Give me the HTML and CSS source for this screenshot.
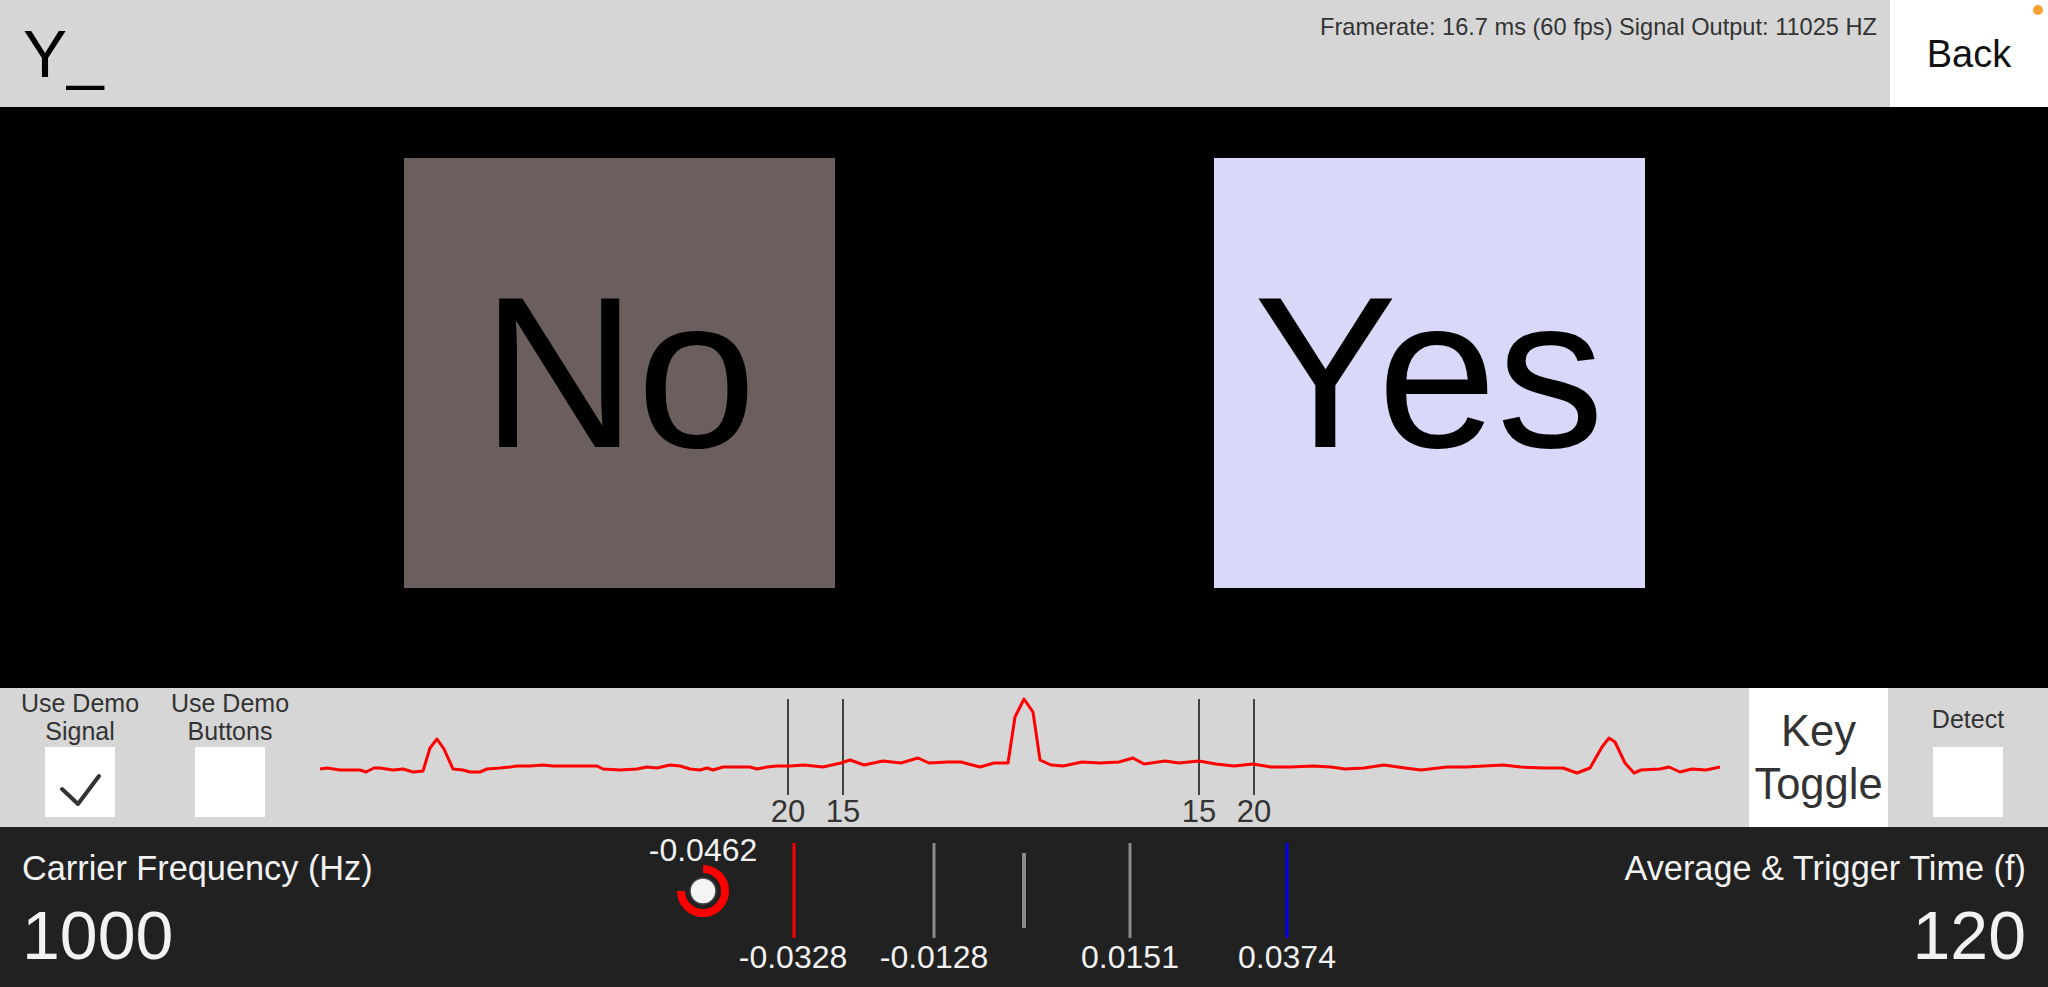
FILE: index.html
```html
<!DOCTYPE html>
<html>
<head>
<meta charset="utf-8">
<link rel="stylesheet" href="styles.css">
</head>
<body>
<div class="app">
  <header class="topbar">
    <div class="title">Y_</div>
    <div class="stats">Framerate: 16.7 ms (60 fps) Signal Output: 11025 HZ</div>
    <div class="back">Back<span class="dot"></span></div>
  </header>

  <main class="stage">
    <div class="choice choice-no">No</div>
    <div class="choice choice-yes">Yes</div>
  </main>

  <section class="controls">
    <div class="opt opt-signal">
      <div class="opt-label">Use Demo<br>Signal</div>
      <div class="box">
        <svg width="70" height="70" viewBox="0 0 70 70"><polyline class="check" points="17,42 33,57 54,29"/></svg>
      </div>
    </div>
    <div class="opt opt-buttons">
      <div class="opt-label">Use Demo<br>Buttons</div>
      <div class="box"></div>
    </div>
    <div class="graph">
      <svg width="1449" height="139" viewBox="300 688 1449 139">
        <line class="mark" x1="788" y1="699" x2="788" y2="795"/>
        <line class="mark" x1="843" y1="699" x2="843" y2="795"/>
        <line class="mark" x1="1199" y1="699" x2="1199" y2="795"/>
        <line class="mark" x1="1254" y1="699" x2="1254" y2="795"/>
        <text class="mark-label" x="788" y="822">20</text>
        <text class="mark-label" x="843" y="822">15</text>
        <text class="mark-label" x="1199" y="822">15</text>
        <text class="mark-label" x="1254" y="822">20</text>
        <polyline class="spectrum" points="320,769 327,768 340,770 360,770 366,772 374,768 380,768 393,770 403,769 413,772 423,771 430,748 437,739 444,749 453,769 463,770 470,772 480,772 487,769 500,768 510,767 517,766 530,766 543,765 553,766 580,766 597,766 603,769 620,770 637,769 647,767 657,768 670,765 680,766 690,769 700,770 707,768 713,770 723,767 737,767 750,767 757,769 767,767 777,766 790,766 804,765 823,767 841,763 850,760 864,765 883,761 901,763 918,758 929,763 948,762 961,762 980,767 994,763 1008,763 1015,717 1024,699 1033,712 1040,760 1051,765 1063,766 1082,762 1100,763 1119,762 1133,758 1144,764 1165,761 1179,763 1199,761 1216,764 1234,766 1253,764 1271,767 1290,767 1313,766 1331,767 1345,769 1364,768 1384,765 1405,768 1421,770 1447,767 1466,767 1484,766 1503,765 1521,767 1544,768 1563,768 1577,773 1590,768 1602,747 1609,738 1615,742 1625,763 1634,773 1641,770 1660,769 1669,767 1680,772 1692,769 1706,770 1720,767"/>
      </svg>
    </div>
    <div class="key">Key<br>Toggle</div>
    <div class="opt opt-detect">
      <div class="opt-label detect-label">Detect</div>
      <div class="box"></div>
    </div>
  </section>

  <footer class="readouts">
    <div class="readout readout-left">
      <div class="readout-label">Carrier Frequency (Hz)</div>
      <div class="readout-value">1000</div>
    </div>
    <svg class="meter" width="720" height="160" viewBox="620 827 720 160">
      <text class="meter-label" x="703" y="861">-0.0462</text>
      <path class="knob-ring" d="M 703 869 A 22 22 0 1 1 681 891"/>
      <circle class="knob" cx="703" cy="891" r="13"/>
      <line class="tick tick-red" x1="794" y1="843" x2="794" y2="938"/>
      <line class="tick tick-gray" x1="934" y1="843" x2="934" y2="938"/>
      <line class="tick tick-center" x1="1024" y1="853" x2="1024" y2="928"/>
      <line class="tick tick-gray" x1="1130" y1="843" x2="1130" y2="938"/>
      <line class="tick tick-blue" x1="1287" y1="843" x2="1287" y2="938"/>
      <text class="meter-label" x="793" y="968">-0.0328</text>
      <text class="meter-label" x="934" y="968">-0.0128</text>
      <text class="meter-label" x="1130" y="968">0.0151</text>
      <text class="meter-label" x="1287" y="968">0.0374</text>
    </svg>
    <div class="readout readout-right">
      <div class="readout-label">Average &amp; Trigger Time (f)</div>
      <div class="readout-value">120</div>
    </div>
  </footer>
</div>
</body>
</html>
```

FILE: styles.css
```css
html, body {
  margin: 0;
  padding: 0;
  background: #000;
}
body {
  width: 2048px;
  height: 987px;
  overflow: hidden;
  font-family: "Liberation Sans", Arial, sans-serif;
}
.app {
  display: flex;
  flex-direction: column;
  width: 2048px;
  height: 987px;
}

/* header */
.topbar {
  display: flex;
  height: 107px;
  background: #d6d6d6;
}
.title {
  flex: 1;
  padding-left: 23px;
  font-size: 66px;
  line-height: 66px;
  align-self: center;
  color: #000;
}
.stats {
  margin-top: 13px;
  padding-right: 13px;
  font-size: 23.6px;
  line-height: 28px;
  color: #333;
  white-space: nowrap;
}
.back {
  position: relative;
  width: 158px;
  box-sizing: border-box;
  padding-top: 2px;
  background: #fff;
  display: flex;
  align-items: center;
  justify-content: center;
  font-size: 38px;
  color: #111;
}
.dot {
  position: absolute;
  top: 5px;
  right: 5px;
  width: 10px;
  height: 10px;
  border-radius: 50%;
  background: #f7a12f;
}

/* stage */
.stage {
  height: 581px;
  box-sizing: border-box;
  padding-top: 51px;
  display: flex;
  justify-content: center;
  align-items: flex-start;
  gap: 379px;
  background: #000;
}
.choice {
  width: 431px;
  height: 430px;
  display: flex;
  align-items: center;
  justify-content: center;
  font-size: 215px;
  color: #000;
}
.choice-no {
  background: #6b5f5d;
}
.choice-yes {
  background: #d8d8f8;
}

/* control bar */
.controls {
  display: flex;
  height: 139px;
  background: #d6d6d6;
  color: #333;
}
.opt {
  display: flex;
  flex-direction: column;
  align-items: center;
}
.opt-signal { width: 160px; }
.opt-buttons { width: 140px; }
.opt-detect { width: 160px; }
.opt-label {
  height: 59px;
  box-sizing: border-box;
  padding-top: 1px;
  font-size: 25px;
  line-height: 28px;
  text-align: center;
  white-space: nowrap;
}
.detect-label {
  padding-top: 17px;
}
.box {
  width: 70px;
  height: 70px;
  background: #fff;
}
.box svg {
  display: block;
}
.check {
  fill: none;
  stroke: #333;
  stroke-width: 4;
  stroke-linecap: round;
  stroke-linejoin: round;
}
.graph {
  width: 1449px;
}
.graph svg {
  display: block;
  overflow: visible;
}
.mark {
  stroke: #111;
  stroke-width: 1.5;
}
.mark-label {
  font-family: "Liberation Sans", Arial, sans-serif;
  font-size: 31px;
  fill: #333;
  text-anchor: middle;
}
.spectrum {
  fill: none;
  stroke: #ff0000;
  stroke-width: 3;
  stroke-linejoin: round;
}
.key {
  width: 139px;
  background: #fff;
  display: flex;
  align-items: center;
  justify-content: center;
  text-align: center;
  font-size: 43.5px;
  line-height: 53px;
  color: #333;
}

/* readouts */
.readouts {
  display: flex;
  height: 160px;
  background: #212121;
  color: #f2f2f2;
}
.readout {
  box-sizing: border-box;
  padding-top: 21px;
  white-space: nowrap;
}
.readout-left {
  width: 620px;
  padding-left: 22px;
}
.readout-right {
  flex: 1;
  text-align: right;
  padding-right: 22px;
}
.readout-label {
  font-size: 34.3px;
  line-height: 40px;
}
.readout-value {
  margin-top: 9px;
  font-size: 68px;
  line-height: 76px;
}
.meter {
  display: block;
}
.meter-label {
  font-family: "Liberation Sans", Arial, sans-serif;
  font-size: 32px;
  fill: #f2f2f2;
  text-anchor: middle;
}
.knob-ring {
  fill: none;
  stroke: #ff0000;
  stroke-width: 8;
}
.knob {
  fill: #f4f4f4;
  stroke: #444;
  stroke-width: 1.5;
}
.tick {
  stroke-width: 3;
}
.tick-red { stroke: #ff0000; }
.tick-gray { stroke: #8a8a8a; }
.tick-center { stroke: #8a8a8a; stroke-width: 4; }
.tick-blue { stroke: #0000f0; }
```
